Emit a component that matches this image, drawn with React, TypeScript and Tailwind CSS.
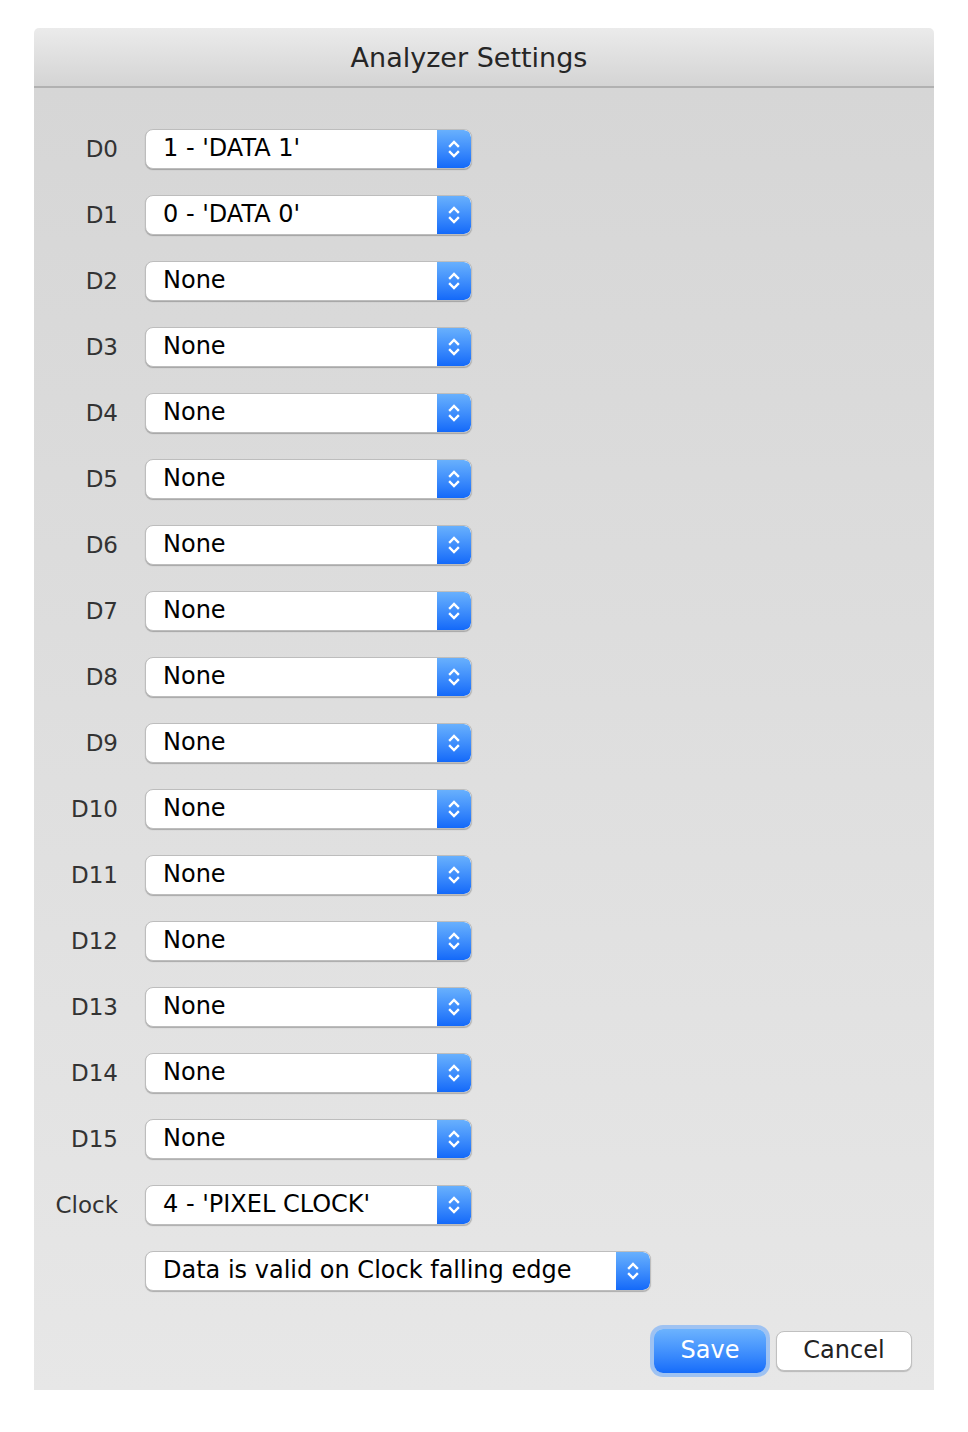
import React from 'react';

const rows: [string, string][] = [
  ['D0', "1 - 'DATA 1'"],
  ['D1', "0 - 'DATA 0'"],
  ...Array.from({ length: 14 }, (_, i) => [`D${i + 2}`, 'None'] as [string, string]),
  ['Clock', "4 - 'PIXEL CLOCK'"],
];

const Stepper: React.FC = () => (
  <div className="flex h-full w-[34px] items-center justify-center rounded-r-[7px] bg-gradient-to-b from-[#68b0fd] to-[#1369f9]">
    <svg width="14" height="24" viewBox="0 0 14 24" fill="none" stroke="white" strokeWidth="2.4" strokeLinecap="square">
      <path d="M3 9l4-4 4 4" />
      <path d="M3 15l4 4 4-4" />
    </svg>
  </div>
);

const Select: React.FC<{ value: string; wide?: boolean }> = ({ value, wide }) => (
  <div
    className={`flex h-[40px] items-stretch overflow-hidden rounded-[8px] border border-[#bdbdbd] bg-white shadow-[0_1px_1px_rgba(0,0,0,0.25)] ${
      wide ? 'w-[506px]' : 'w-[327px]'
    }`}
  >
    <div className="flex flex-1 items-center pl-[17px] pb-[2px] text-[24px] text-black">{value}</div>
    <Stepper />
  </div>
);

export default function App() {
  return (
    <div className="min-h-[1432px] bg-white pl-[34px] pt-[28px] font-['DejaVu_Sans',Verdana,sans-serif]">
      <div className="flex h-[1362px] w-[900px] flex-col overflow-hidden rounded-t-[5px]">
        <header className="flex h-[60px] items-center justify-center border-b-2 border-[#b1b1b1] bg-gradient-to-b from-[#ebebeb] to-[#d4d4d4] pr-[30px] pt-[2px] text-[27px] text-[#262626]">
          Analyzer Settings
        </header>
        <div className="flex flex-1 flex-col bg-gradient-to-b from-[#d6d6d6] to-[#e7e7e7] pt-[41px]">
          <div className="flex flex-col gap-[26px]">
            {rows.map(([label, value]) => (
              <div key={label} className="flex items-center">
                <div className="w-[84px] text-right text-[23px] text-[#333]">{label}</div>
                <div className="ml-[27px]">
                  <Select value={value} />
                </div>
              </div>
            ))}
            <div className="flex items-center pl-[111px]">
              <Select value="Data is valid on Clock falling edge" wide />
            </div>
          </div>
          <div className="mt-[38px] flex justify-end gap-[10px] pr-[22px]">
            <button className="flex h-[44px] w-[112px] items-center justify-center rounded-[9px] bg-gradient-to-b from-[#6cb3fe] to-[#156cfa] pb-[2px] text-[24px] text-white shadow-[0_0_0_4px_rgba(110,170,250,0.6)]">
              Save
            </button>
            <button className="flex h-[40px] w-[136px] items-center justify-center self-center rounded-[8px] border border-[#c0c0c0] bg-white pb-[2px] text-[24px] text-[#222] shadow-[0_1px_1px_rgba(0,0,0,0.2)]">
              Cancel
            </button>
          </div>
        </div>
      </div>
    </div>
  );
}
